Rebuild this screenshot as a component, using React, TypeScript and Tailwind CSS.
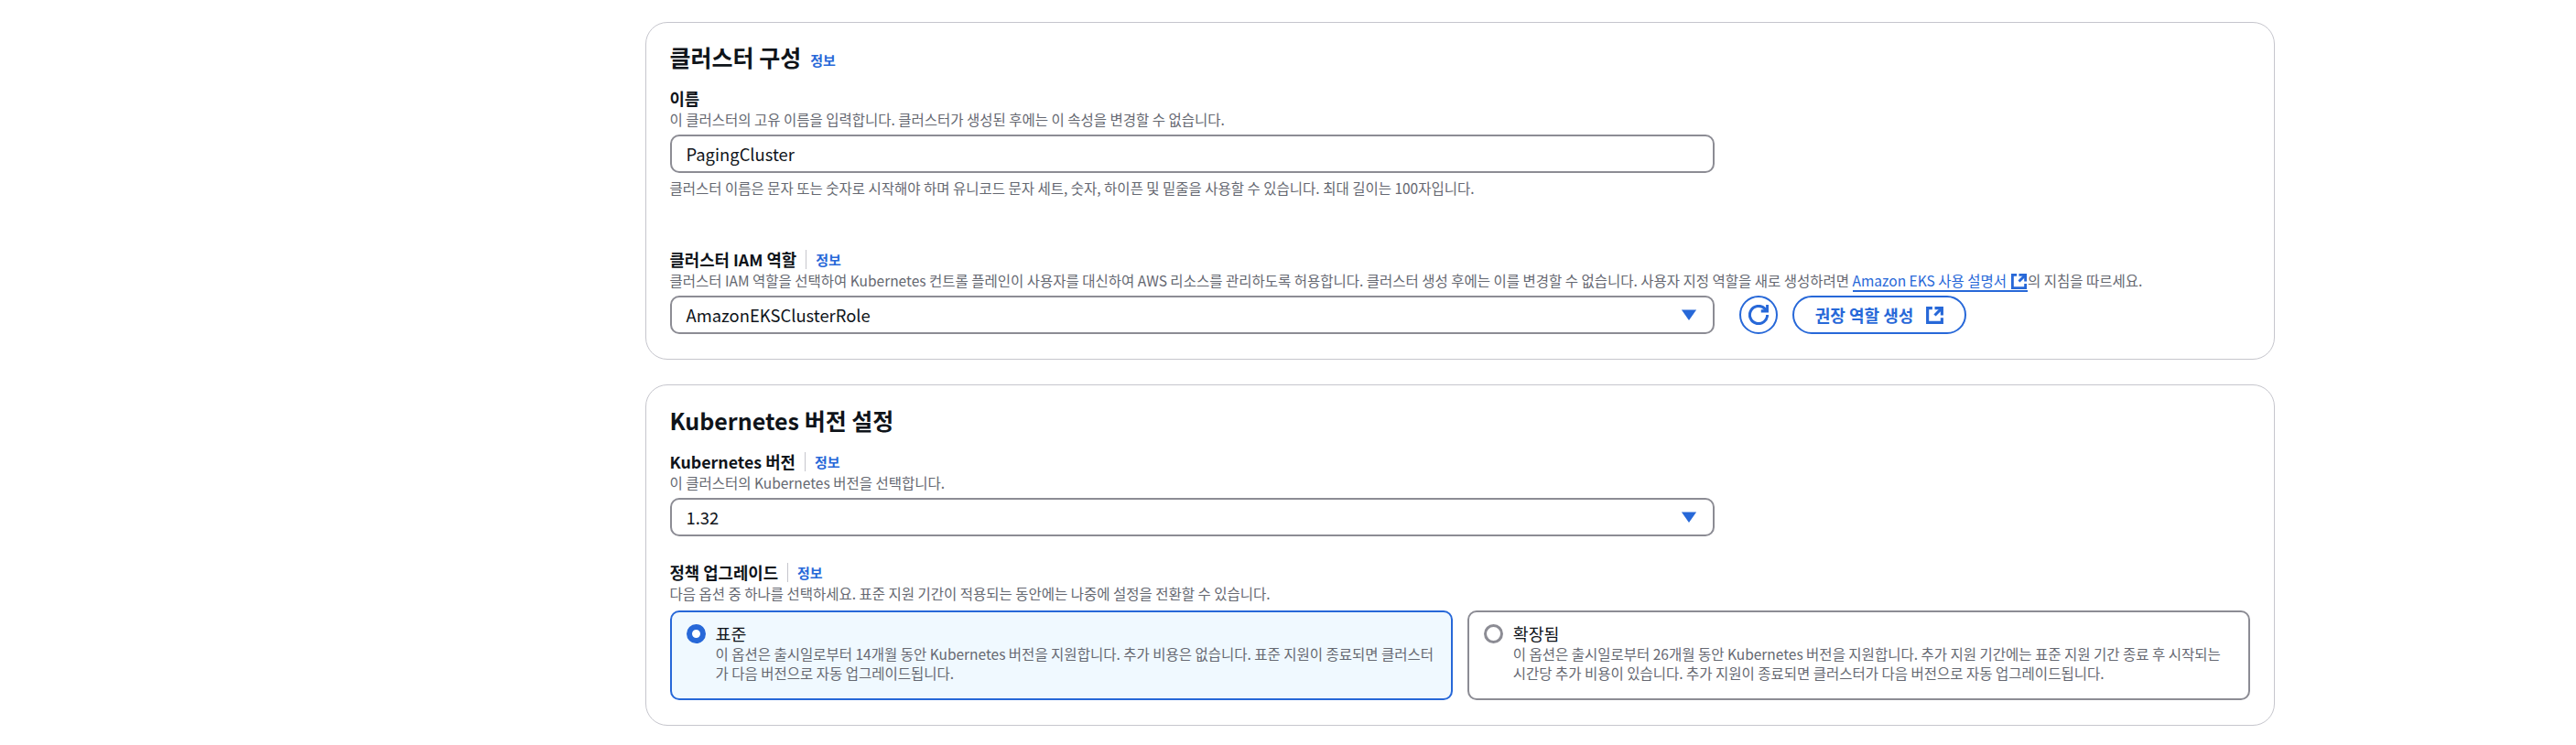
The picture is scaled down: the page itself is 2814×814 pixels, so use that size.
const font = "font-['Noto_Sans_CJK_KR','Noto_Sans',sans-serif]";

function ExternalIcon({ className }: { className: string }) {
  return (
    <svg viewBox="0 0 16 16" fill="none" stroke="currentColor" strokeWidth="2.4" className={className}>
      <path d="M14 8.01v-6H8" />
      <path d="M14.02 2 8 8" />
      <path d="M6 2H2v12h12v-4" />
    </svg>
  );
}

function Caret() {
  return (
    <svg viewBox="0 0 16 16" className="h-[24px] w-[24px] text-[#2768d8]" fill="currentColor">
      <path d="M2.6 4.4h10.8L8 12z" />
    </svg>
  );
}

function Info() {
  return <span className="text-[15px] font-bold leading-[21px] text-[#2768d8]">정보</span>;
}

function Label({ text }: { text: string }) {
  return (
    <div className="flex h-[26px] items-center">
      <span className="text-[17.8px] font-bold leading-[26px] text-[#0f141a]">{text}</span>
      <span className="mx-[10px] h-[21px] w-px bg-[#c6c6cd]" />
      <Info />
    </div>
  );
}

function Hint({ children, className = "" }: { children: React.ReactNode; className?: string }) {
  return <p className={`text-[15.5px] leading-[21px] text-[#656871] ${className}`}>{children}</p>;
}

function Field({ value, caret = false }: { value: string; caret?: boolean }) {
  return (
    <div className="mt-[6px] flex h-[42px] w-[1141px] items-center justify-between rounded-[10px] border-2 border-[#8c8c94] bg-white pl-[16px] pr-[14px] text-[18.4px] text-[#0f141a]">
      <span className="pt-[1px]">{value}</span>
      {caret && <Caret />}
    </div>
  );
}

function Option({ title, lines, selected }: { title: string; lines: string[]; selected?: boolean }) {
  return (
    <div
      className={`flex h-[98px] flex-1 gap-[11px] rounded-[10px] border-2 pl-[16px] pt-[12px] ${
        selected ? "border-[#2768d8] bg-[#f0f9ff]" : "border-[#8c8c94] bg-white"
      }`}
    >
      <span
        className={`mt-[1px] h-[21px] w-[21px] shrink-0 rounded-full bg-white ${
          selected ? "border-[6px] border-[#2768d8]" : "border-[3px] border-[#8c8c94]"
        }`}
      />
      <div>
        <div className="text-[18.4px] leading-[23px] text-[#0f141a]">{title}</div>
        {lines.map((l) => (
          <Hint key={l}>{l}</Hint>
        ))}
      </div>
    </div>
  );
}

export default function App() {
  return (
    <div className={`min-h-[814px] bg-white pl-[705px] pt-[24px] ${font}`}>
      <div className="flex w-[1780px] flex-col gap-[27px]">
        <section className="h-[369px] rounded-[24px] border border-[#c6c6cd] pl-[25.5px] pr-[26px] pt-[20px]">
          <div className="flex h-[34px] items-center gap-[10px]">
            <h2 className="text-[25px] font-bold leading-[34px] text-[#0f141a]">클러스터 구성</h2>
            <span className="mt-[5px]"><Info /></span>
          </div>
          <div className="mt-[16px] text-[17.8px] font-bold leading-[24px] text-[#0f141a]">이름</div>
          <Hint className="mt-[1px]">이 클러스터의 고유 이름을 입력합니다. 클러스터가 생성된 후에는 이 속성을 변경할 수 없습니다.</Hint>
          <Field value="PagingCluster" />
          <Hint className="mt-[6px]">클러스터 이름은 문자 또는 숫자로 시작해야 하며 유니코드 문자 세트, 숫자, 하이픈 및 밑줄을 사용할 수 있습니다. 최대 길이는 100자입니다.</Hint>
          <div className="mt-[54px]"><Label text="클러스터 IAM 역할" /></div>
          <Hint>
            클러스터 IAM 역할을 선택하여 Kubernetes 컨트롤 플레인이 사용자를 대신하여 AWS 리소스를 관리하도록 허용합니다. 클러스터 생성 후에는 이를 변경할 수 없습니다. 사용자 지정 역할을 새로 생성하려면{" "}
            <span className="border-b-2 border-[#2768d8] text-[#2768d8]">
              Amazon EKS 사용 설명서
              <ExternalIcon className="ml-[4px] inline-block h-[19px] w-[19px] align-[-4px]" />
            </span>
            의 지침을 따르세요.
          </Hint>
          <div className="flex items-start gap-[16px]">
            <Field value="AmazonEKSClusterRole" caret />
            <div className="ml-[11px] mt-[6px] flex items-center gap-[16px]">
              <span className="flex h-[42px] w-[42px] items-center justify-center rounded-full border-2 border-[#2768d8] text-[#2768d8]">
                <svg viewBox="0 0 16 16" fill="none" stroke="currentColor" strokeWidth="2.2" className="h-[22px] w-[22px]">
                  <path d="M10 5h5V0" />
                  <path d="M15 8a6.98 6.98 0 1 1-2.05-4.95L15 5" />
                </svg>
              </span>
              <span className="flex h-[42px] w-[190px] items-center justify-center gap-[13px] rounded-full border-2 border-[#2768d8] pl-[2px] text-[18px] font-bold text-[#2768d8]">
                권장 역할 생성
                <ExternalIcon className="h-[21px] w-[21px]" />
              </span>
            </div>
          </div>
        </section>

        <section className="h-[373px] rounded-[24px] border border-[#c6c6cd] pl-[25.5px] pr-[26px] pt-[19px]">
          <h2 className="h-[38px] text-[25px] font-bold leading-[38px] text-[#0f141a]">Kubernetes 버전 설정</h2>
          <div className="mt-[13px]"><Label text="Kubernetes 버전" /></div>
          <Hint>이 클러스터의 Kubernetes 버전을 선택합니다.</Hint>
          <Field value="1.32" caret />
          <div className="mt-[26px]"><Label text="정책 업그레이드" /></div>
          <Hint>다음 옵션 중 하나를 선택하세요. 표준 지원 기간이 적용되는 동안에는 나중에 설정을 전환할 수 있습니다.</Hint>
          <div className="mt-[8px] flex gap-[16px]">
            <Option
              selected
              title="표준"
              lines={[
                "이 옵션은 출시일로부터 14개월 동안 Kubernetes 버전을 지원합니다. 추가 비용은 없습니다. 표준 지원이 종료되면 클러스터",
                "가 다음 버전으로 자동 업그레이드됩니다.",
              ]}
            />
            <Option
              title="확장됨"
              lines={[
                "이 옵션은 출시일로부터 26개월 동안 Kubernetes 버전을 지원합니다. 추가 지원 기간에는 표준 지원 기간 종료 후 시작되는",
                "시간당 추가 비용이 있습니다. 추가 지원이 종료되면 클러스터가 다음 버전으로 자동 업그레이드됩니다.",
              ]}
            />
          </div>
        </section>
      </div>
    </div>
  );
}
